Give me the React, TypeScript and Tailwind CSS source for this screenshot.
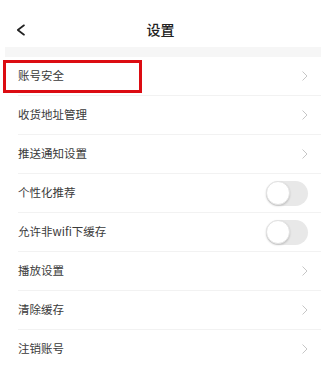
type Row = { label: string; kind: "link" | "switch" };

const rows: Row[] = [
  { label: "账号安全", kind: "link" },
  { label: "收货地址管理", kind: "link" },
  { label: "推送通知设置", kind: "link" },
  { label: "个性化推荐", kind: "switch" },
  { label: "允许非wifi下缓存", kind: "switch" },
  { label: "播放设置", kind: "link" },
  { label: "清除缓存", kind: "link" },
  { label: "注销账号", kind: "link" },
];

function Chevron() {
  return (
    <svg width="6" height="10" viewBox="0 0 6 10" fill="none" aria-hidden="true">
      <path d="M0.8 0.8L5 5L0.8 9.2" stroke="#c6c6c6" strokeWidth="1" strokeLinecap="round" strokeLinejoin="round" />
    </svg>
  );
}

function BackArrow() {
  return (
    <svg width="10" height="12" viewBox="0 0 10 12" fill="none" aria-hidden="true">
      <path d="M8 1.3L1.8 6L8 10.7" stroke="#222" strokeWidth="1.7" strokeLinecap="round" strokeLinejoin="round" />
    </svg>
  );
}

function Toggle() {
  return (
    <div className="flex h-[25px] w-[42px] items-center rounded-full bg-[#e8e8e8]">
      <div className="h-[24px] w-[24px] rounded-full border border-[#e2e2e2] bg-white shadow-[0_1px_2px_rgba(0,0,0,0.18)]" />
    </div>
  );
}

export default function App() {
  return (
    <div className="h-[367px] w-[321px] overflow-hidden bg-white font-['Noto_Sans_CJK_SC','Noto_Sans',sans-serif] text-[#3a3a3a]">
      <header className="relative flex h-[47px] items-center justify-center pt-[10px]">
        <div className="absolute left-[16px] top-[24px]">
          <BackArrow />
        </div>
        <h1 className="text-[14px] font-medium leading-none text-[#222]">设置</h1>
      </header>
      <div className="ml-[5px] h-[10px] bg-[#f6f6f6]" />
      <ul>
        {rows.map((row, i) => (
          <li key={row.label} className="relative pl-[18px]">
            <div className="flex h-[39px] items-center justify-between border-b border-[#f2f2f2] pr-[13px]">
              <span className="text-[11.5px] leading-none">{row.label}</span>
              {row.kind === "link" ? <Chevron /> : <Toggle />}
            </div>
            {i === 0 ? (
              <div className="absolute left-[3px] top-[3px] h-[33px] w-[139px] border-[3px] border-[#dc0c12]" />
            ) : null}
          </li>
        ))}
      </ul>
    </div>
  );
}
